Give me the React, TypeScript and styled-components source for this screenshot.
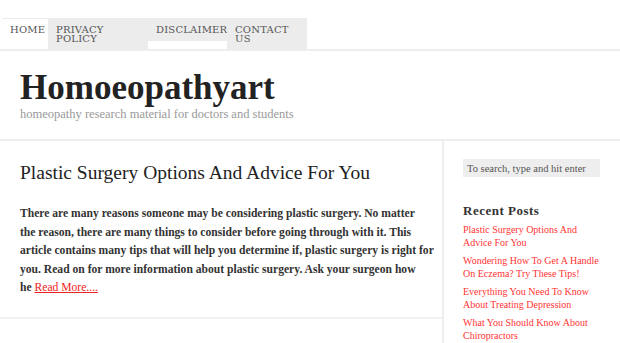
import styled, { createGlobalStyle } from "styled-components";

const GlobalStyle = createGlobalStyle`
  body {
    margin: 0;
    background: #fff;
    font-family: "Liberation Serif", serif;
  }
`;

const navItems = [
  { label: "HOME", width: 46, active: true },
  { label: "PRIVACY POLICY", width: 100 },
  { label: "DISCLAIMER", width: 79 },
  { label: "CONTACT US", width: 80 },
];

const recentPosts = [
  "Plastic Surgery Options And Advice For You",
  "Wondering How To Get A Handle On Eczema? Try These Tips!",
  "Everything You Need To Know About Treating Depression",
  "What You Should Know About Chiropractors",
];

// excerpt lines, kept as they wrap on the live page
const excerpt = [
  "There are many reasons someone may be considering plastic surgery. No matter",
  "the reason, there are many things to consider before going through with it. This",
  "article contains many tips that will help you determine if, plastic surgery is right for",
  "you. Read on for more information about plastic surgery. Ask your surgeon how",
];

export default function App() {
  return (
    <Page>
      <GlobalStyle />
      <NavBar>
        <NavList>
          {navItems.map((item) => (
            <NavItem key={item.label} $width={item.width} $active={item.active}>
              {item.label}
            </NavItem>
          ))}
        </NavList>
      </NavBar>

      <Header>
        <SiteTitle>Homoeopathyart</SiteTitle>
        <Tagline>homeopathy research material for doctors and students</Tagline>
      </Header>

      <Main>
        <Content>
          <Post>
            <PostTitle>Plastic Surgery Options And Advice For You</PostTitle>
            <PostText>
              {excerpt.map((line) => (
                <ExcerptLine key={line}>{line}</ExcerptLine>
              ))}
              <ExcerptLine>
                he <ReadMore href="#">Read More....</ReadMore>
              </ExcerptLine>
            </PostText>
          </Post>
          <Post>
            <PostTitle>Wondering How To Get A Handle On Eczema?</PostTitle>
          </Post>
        </Content>

        <Sidebar>
          <SearchBox placeholder="To search, type and hit enter" />
          <WidgetTitle>Recent Posts</WidgetTitle>
          <RecentList>
            {recentPosts.map((p) => (
              <RecentItem key={p}>
                <a href="#">{p}</a>
              </RecentItem>
            ))}
          </RecentList>
        </Sidebar>
      </Main>
    </Page>
  );
}

const Page = styled.div`
  width: 620px;
  height: 343px;
  overflow: hidden;
`;

const NavBar = styled.nav`
  padding-top: 18px;
  border-bottom: 2px solid #eee;
`;

const NavList = styled.ul`
  display: flex;
  align-items: flex-start;
  list-style: none;
  margin: 0 0 0 2px;
  padding: 0;
`;

const NavItem = styled.li<{ $width: number; $active?: boolean }>`
  box-sizing: border-box;
  width: ${(p) => p.$width}px;
  min-height: ${(p) => (p.$active ? 30 : 23)}px;
  padding: 6px 8px;
  background: ${(p) => (p.$active ? "#fff" : "#ececec")};
  border-top: 1px solid #ececec;
  font-family: "DejaVu Serif", serif;
  font-size: 10px;
  line-height: 9px;
  color: #555;
  letter-spacing: 0.2px;
`;

const Header = styled.header`
  padding: 17px 20px 17px;
  border-bottom: 2px solid #eee;
`;

const SiteTitle = styled.h1`
  margin: 0;
  font-family: "Liberation Serif", serif;
  font-weight: bold;
  font-size: 35px;
  line-height: 40px;
  color: #222;
`;

const Tagline = styled.div`
  margin-top: -2px;
  font-size: 12.5px;
  line-height: 16px;
  color: #999;
`;

const Main = styled.div`
  display: grid;
  grid-template-columns: 444px 1fr;
`;

const Content = styled.main`
  border-right: 2px solid #eee;
`;

const Post = styled.article`
  padding: 18px 16px 19px 20px;
  border-bottom: 2px solid #f2f2f2;
`;

const PostTitle = styled.h2`
  margin: 0 0 18px;
  font-weight: normal;
  font-size: 19.5px;
  line-height: 28px;
  color: #222;
`;

const PostText = styled.p`
  margin: 0;
  font-weight: bold;
  font-size: 11.6px;
  line-height: 18.6px;
  color: #333;
`;

const ExcerptLine = styled.span`
  display: block;
  white-space: nowrap;
`;

const ReadMore = styled.a`
  color: #e22;
  font-weight: normal;
`;

const Sidebar = styled.aside`
  padding: 18px 16px 0 19px;
`;

const SearchBox = styled.input`
  box-sizing: border-box;
  display: block;
  width: 137px;
  height: 18px;
  padding: 0 4px;
  border: none;
  background: #eee;
  font-family: "Liberation Serif", serif;
  font-size: 10.5px;
  &::placeholder {
    color: #555;
  }
`;

const WidgetTitle = styled.h3`
  margin: 26px 0 5px;
  font-size: 13px;
  letter-spacing: 0.5px;
  color: #333;
`;

const RecentList = styled.ul`
  list-style: none;
  margin: 0;
  padding: 0;
`;

const RecentItem = styled.li`
  margin-bottom: 6px;
  font-size: 10px;
  line-height: 12.5px;
  a {
    color: #f33;
    text-decoration: none;
  }
`;
